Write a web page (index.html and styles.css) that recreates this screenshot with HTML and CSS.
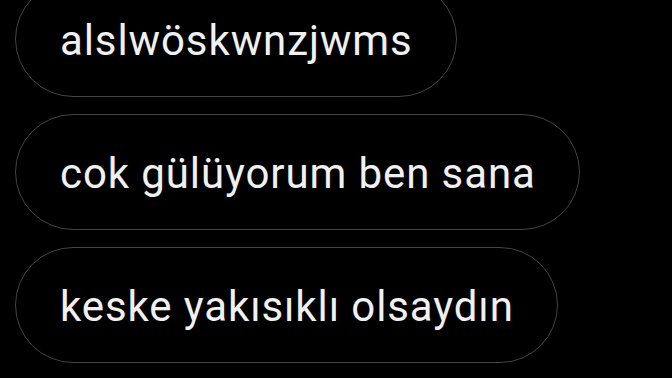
FILE: index.html
```html
<!DOCTYPE html>
<html lang="tr">
<head>
    <meta charset="UTF-8">
    <title>Mesajlar</title>
    <meta name="viewport" content="width=device-width, initial-scale=1.0">
    <link rel="stylesheet" href="styles.css">
</head>
<body>
    <div class="thread">
        <div class="bubble">alslwöskwnzjwms</div>
        <div class="bubble">cok gülüyorum ben sana</div>
        <div class="bubble">keske yakısıklı olsaydın</div>
    </div>
</body>
</html>
```

FILE: styles.css
```css
body {
    margin: 0;
    background: #000;
    color: #f0f0f0;
    font-family: Roboto, 'Liberation Sans', sans-serif;
    height: 378px;
    overflow: hidden;
}
.thread {
    display: flex;
    flex-direction: column;
    align-items: flex-start;
    gap: 17px;
    margin-top: -19px;
    padding-left: 15px;
}
.bubble {
    height: 112px;
    display: flex;
    align-items: center;
    padding: 2px 43px 0 44px;
    border: 1.5px solid #444;
    border-radius: 60px;
    font-size: 42px;
    letter-spacing: 0.9px;
    white-space: nowrap;
}
```
